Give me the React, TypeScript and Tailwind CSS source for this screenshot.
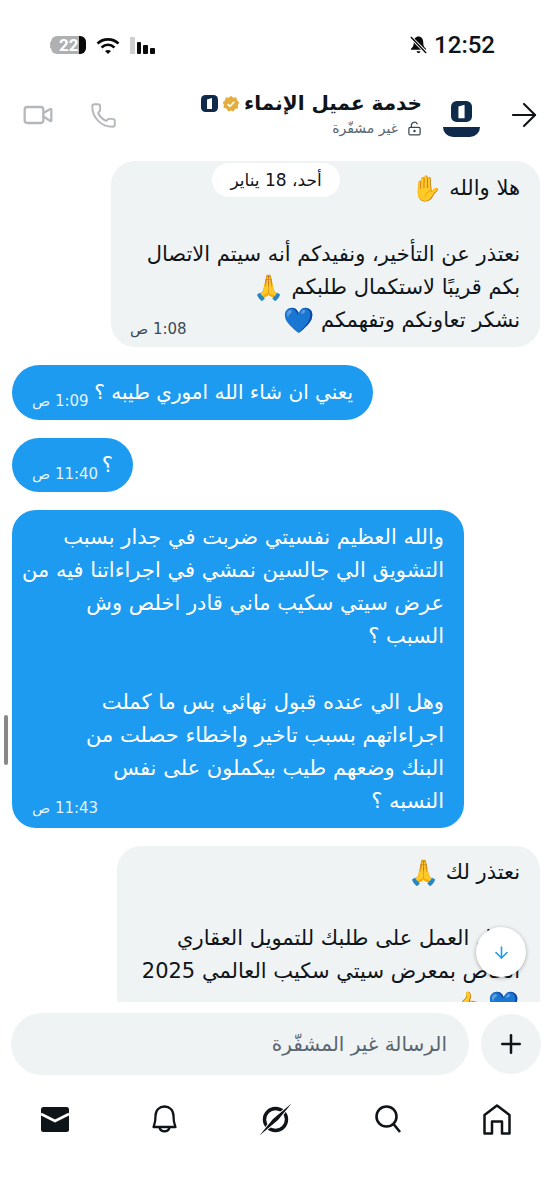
import React from 'react';
import { Plus, ArrowRight, ArrowDown, Video, Phone, LockKeyholeOpen } from 'lucide-react';

const arabic = "font-['DejaVu_Sans','Noto_Sans',sans-serif]";

const Emoji = ({ children }: { children: React.ReactNode }) => (
  <span className="align-[-2px] font-['Noto_Color_Emoji',sans-serif] text-[25px] leading-none">{children}</span>
);

// Small bank mark shown next to the name
const Logo = ({ className }: { className: string }) => (
  <svg viewBox="0 0 17 17" className={className}>
    <rect width="17" height="17" rx="4.500" fill="#102a4c" />
    <path d="M6 4.500l5-1.500v11H6z" fill="#fff" />
  </svg>
);

const Badge = () => (
  <svg viewBox="0 0 24 24" className="h-[18px] w-[18px]">
    <path d="M12 1l3 2.500 4-.5 1 4 3 3-2 3.500.5 4-4 1-2.500 3.500-3-1.500-3.500 1.500L6 18l-4-1 .5-4L1 10l3-3 1-4 4 .5z" fill="#e3ae3b" />
    <path d="M7.500 12l3 3 6-6" stroke="#fff" strokeWidth="2.200" fill="none" />
  </svg>
);

const Time = ({ children, light }: { children: React.ReactNode; light?: boolean }) => (
  <div dir="rtl" className={`whitespace-nowrap text-[15px] leading-[15px] ${light ? 'text-[#e3f2ff]' : 'text-[#3d4a54]'}`}>{children}</div>
);

const Line = ({ children }: { children?: React.ReactNode }) => (
  <div className="h-[33px] whitespace-nowrap leading-[33px]">{children}</div>
);

export default function App() {
  return (
    <div dir="ltr" className={`flex h-[1200px] w-[552px] flex-col overflow-hidden bg-white text-[#0f1419] ${arabic}`}>
      {/* Status bar */}
      <div className="flex h-[82px] shrink-0 items-center justify-between pl-[50px] pr-[57px] pt-[8px]">
        <div className="flex items-center">
          <div className="h-[6px] w-[1px] bg-[#b9b9b9]" />
          <div className="flex h-[18px] w-[35px] items-center overflow-hidden rounded-[6px] bg-[#b0b0b0]">
            <span className="pl-[8px] font-['Roboto',sans-serif] text-[17px] font-bold leading-none text-white">22</span>
            <span className="ml-auto h-full w-[8px] bg-[#0a0a0a]" />
          </div>
          <svg viewBox="0 0 24 17" className="ml-[10px] h-[17px] w-[24px]" fill="none" stroke="#0a0a0a" strokeWidth="2.600">
            <path d="M1.500 6.500c6-5.500 15-5.500 21 0" />
            <path d="M5.500 10.500c4-3.500 9-3.500 13 0" />
            <path d="M12 17l-3-3c2-1.500 4-1.500 6 0z" fill="#0a0a0a" stroke="none" />
          </svg>
          <div className="ml-[10px] flex h-[17px] items-end gap-[2px]">
            <span className="h-[17px] w-[5px] bg-[#d0d0d0]" />
            <span className="h-[12px] w-[4px] rounded-[1px] bg-[#0a0a0a]" />
            <span className="h-[9px] w-[5px] rounded-[1px] bg-[#0a0a0a]" />
            <span className="h-[6px] w-[5px] rounded-[1px] bg-[#0a0a0a]" />
          </div>
        </div>
        <div className="flex items-center gap-[6px]">
          <svg viewBox="0 0 20 20" className="h-[20px] w-[19px]">
            <path d="M10 1c-3 0-5 2.500-5 6 0 4-1 5-3 7v1h16v-1c-2-2-3-3-3-7 0-3.500-2-6-5-6z" fill="#0a0a0a" />
            <path d="M8 16.500c0 2.500 4 2.500 4 0z" fill="#0a0a0a" />
            <path d="M2 2l16 16" stroke="#fff" strokeWidth="3.500" />
            <path d="M2 1.500l16 17" stroke="#0a0a0a" strokeWidth="1.500" />
          </svg>
          <span className="font-['Roboto',sans-serif] text-[24px] font-medium leading-none">12:52</span>
        </div>
      </div>

      {/* Conversation header */}
      <div className="flex h-[74px] shrink-0 items-start pl-[22px] pr-[9px]">
        <div className="flex h-[66px] items-center">
          <Video size={32} strokeWidth={1.700} className="text-[#b4b8bb]" />
          <Phone size={27} strokeWidth={1.700} className="ml-[36px] text-[#b4b8bb]" />
        </div>
        <div className="ml-auto flex flex-col items-end pt-[8px]">
          <div className="flex items-center gap-[4px]">
            <Logo className="h-[17px] w-[17px]" />
            <Badge />
            <span dir="rtl" className="text-[20px] font-bold leading-[27px]">خدمة عميل الإنماء</span>
          </div>
          <div className="flex items-center gap-[9px]">
            <span dir="rtl" className="text-[14px] leading-[23px] text-[#59656f]">غير مشفّرة</span>
            <LockKeyholeOpen size={15} className="text-[#3d4a54]" />
          </div>
        </div>
        <div className="ml-[21px] flex flex-col items-center pt-[19px]">
          <Logo className="h-[21px] w-[21px]" />
          <div className="mt-[5px] h-[10px] w-[37px] rounded-b-full bg-[#102a4c]" />
        </div>
        <div className="ml-[25px] flex h-[66px] items-center">
          <ArrowRight size={38} strokeWidth={1.300} className="text-[#0f1419]" />
        </div>
      </div>

      {/* Messages */}
      <div className="relative flex min-h-0 flex-1 flex-col gap-[18px] overflow-hidden px-[12px] pt-[5px] text-[21px]">
        <div className="absolute left-[4px] top-[559px] h-[50px] w-[4px] rounded-full bg-[#888]" />

        <div dir="rtl" className="relative w-[429px] self-end rounded-[24px] bg-[#eff3f4] px-[20px] pb-[10px] pt-[11px]">
          <div dir="rtl" className="absolute left-[101px] top-[2px] w-[128px] rounded-full bg-white py-[6px] text-center text-[17px] leading-[22px]">أحد، 18 يناير</div>
          <Line>هلا والله <Emoji>✋</Emoji></Line>
          <Line />
          <Line>نعتذر عن التأخير، ونفيدكم أنه سيتم الاتصال</Line>
          <Line>بكم قريبًا لاستكمال طلبكم <Emoji>🙏</Emoji></Line>
          <Line>نشكر تعاونكم وتفهمكم <Emoji>💙</Emoji></Line>
          <div className="absolute bottom-[10px] left-[19px]"><Time>1:08 ص</Time></div>
        </div>

        <div dir="rtl" className="flex w-[361px] items-end justify-between self-start rounded-[28px] bg-[#1d9bf0] px-[20px] py-[11px] text-[20px] text-white">
          <Line>يعني ان شاء الله اموري طيبه ؟</Line>
          <Time light>1:09 ص</Time>
        </div>

        <div dir="rtl" className="flex w-[121px] items-end justify-between self-start rounded-[27px] bg-[#1d9bf0] px-[20px] pb-[10px] pt-[11px] text-white">
          <Line>؟</Line>
          <Time light>11:40 ص</Time>
        </div>

        <div dir="rtl" className="relative w-[452px] self-start rounded-[24px] bg-[#1d9bf0] px-[20px] pb-[10px] pt-[11px] text-white">
          <Line>والله العظيم نفسيتي ضربت في جدار بسبب</Line>
          <Line>التشويق الي جالسين نمشي في اجراءاتنا فيه من</Line>
          <Line>عرض سيتي سكيب ماني قادر اخلص وش</Line>
          <Line>السبب ؟</Line>
          <Line />
          <Line>وهل الي عنده قبول نهائي بس ما كملت</Line>
          <Line>اجراءاتهم بسبب تاخير واخطاء حصلت من</Line>
          <Line>البنك وضعهم طيب بيكملون على نفس</Line>
          <Line>النسبه ؟</Line>
          <div className="absolute bottom-[12px] left-[20px]"><Time light>11:43 ص</Time></div>
        </div>

        <div dir="rtl" className="w-[423px] self-end rounded-t-[24px] bg-[#eff3f4] px-[20px] pb-[20px] pt-[10px]">
          <Line>نعتذر لك <Emoji>🙏</Emoji></Line>
          <Line />
          <Line>نعمل العمل على طلبك للتمويل العقاري</Line>
          <Line>الخاص بمعرض سيتي سكيب العالمي 2025</Line>
          <Line><Emoji>💙</Emoji> <Emoji>👍</Emoji></Line>
        </div>

        <div className="absolute left-[476px] top-[771px] flex h-[50px] w-[50px] items-center justify-center rounded-full bg-white shadow-[0_1px_4px_rgba(0,0,0,0.3)]">
          <ArrowDown size={19} className="text-[#1d9bf0]" />
        </div>
      </div>

      {/* Composer */}
      <div className="flex h-[86px] shrink-0 items-start gap-[12px] px-[11px] pt-[11px]">
        <div dir="rtl" className="flex h-[62px] flex-1 items-center rounded-full bg-[#eff3f4] px-[22px] text-[20px] text-[#59656f]">الرسالة غير المشفّرة</div>
        <div className="mt-[1px] flex h-[60px] w-[60px] items-center justify-center rounded-full bg-[#eff3f4]">
          <Plus size={30} strokeWidth={2} className="text-[#0f1419]" />
        </div>
      </div>

      {/* Bottom nav */}
      <div className="flex h-[62px] shrink-0 items-center justify-between px-[41px]">
        <svg viewBox="0 0 28 25" className="h-[25px] w-[28px]">
          <rect width="28" height="25" rx="2.500" fill="#0f1419" />
          <path d="M0 7l14 7 14-7" fill="none" stroke="#fff" strokeWidth="2.600" />
        </svg>
        <svg viewBox="0 0 25 29" fill="none" stroke="#0f1419" strokeWidth="2.300" className="h-[29px] w-[25px]">
          <path d="M1.500 22c1-3 2-4 2-11 0-6 4-9.500 9-9.500s9 3.500 9 9.500c0 7 1 8 2 11H1.500z" strokeLinejoin="round" />
          <path d="M7.500 22.500c1 5 9 5 10 0" />
        </svg>
        <svg viewBox="0 0 33 33" fill="none" className="h-[33px] w-[33px]">
          <circle cx="16.500" cy="16.500" r="11" stroke="#0f1419" strokeWidth="3.400" />
          <path d="M0 33L13 14.500 33 0 20 18.500z" fill="#fff" />
          <path d="M0.500 32.500L14 16 32.500 0.500 19 17z" fill="#0f1419" />
        </svg>
        <svg viewBox="0 0 26 28" fill="none" stroke="#0f1419" strokeWidth="2.600" className="h-[28px] w-[26px]">
          <circle cx="11.500" cy="11.500" r="10" />
          <path d="M18.500 19L25 27" />
        </svg>
        <svg viewBox="0 0 28 31" fill="none" stroke="#0f1419" strokeWidth="2.500" className="h-[31px] w-[28px]">
          <path d="M1.500 29.500V11L14 1.500 26.500 11v18.500h-7.500V17.500H9v12H1.500z" strokeLinejoin="round" />
        </svg>
      </div>

      {/* Empty strip under the nav */}
      <div className="h-[50px] shrink-0" />
    </div>
  );
}
